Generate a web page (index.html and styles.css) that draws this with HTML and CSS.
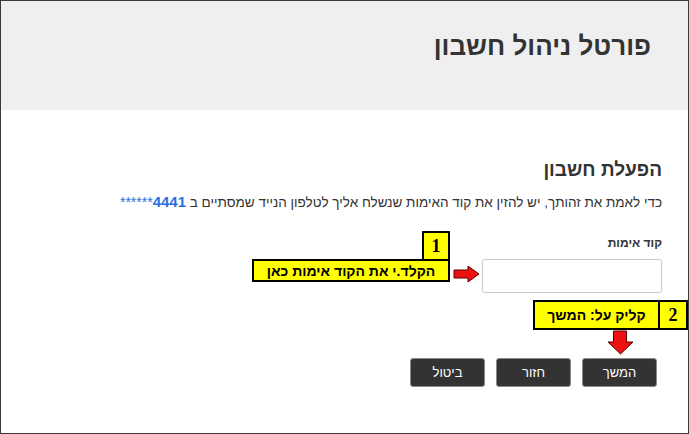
FILE: index.html
```html
<!DOCTYPE html>
<html lang="he" dir="rtl">
<head>
<meta charset="utf-8">
<title>פורטל ניהול חשבון</title>
<link rel="stylesheet" href="styles.css">
</head>
<body>
<div class="frame">
  <header class="top">
    <h1 class="portal-title">פורטל ניהול חשבון</h1>
  </header>
  <main class="content">
    <h2 class="section-title">הפעלת חשבון</h2>
    <p class="intro">כדי לאמת את זהותך, יש להזין את קוד האימות שנשלח אליך לטלפון הנייד שמסתיים ב <b class="num">4441</b><span class="stars">******</span></p>
    <label class="field-label" for="code">קוד אימות</label>
    <input id="code" class="code-input" type="text">
    <div class="actions">
      <button class="btn">המשך</button>
      <button class="btn">חזור</button>
      <button class="btn">ביטול</button>
    </div>
  </main>

  <div class="callout-one">
    <span class="callout-num">1</span>
    <span class="callout-text">הקלד.י את הקוד אימות כאן</span>
  </div>
  <svg class="arrow-right" width="27" height="18" viewBox="0 0 27 18"><path d="M1 5 H15 V1 L26 9 L15 17 V13 H1 Z" fill="#ee1111" stroke="#5a0000" stroke-width="1"/></svg>

  <div class="callout-two">
    <span class="callout2-num">2</span>
    <span class="callout2-text">קליק על: המשך</span>
  </div>
  <svg class="arrow-down" width="27" height="25" viewBox="0 0 27 25"><path d="M6.5 1 H19.5 V12 H26 L13.5 24 L1 12 H6.5 Z" fill="#ee1111" stroke="#5a0000" stroke-width="1"/></svg>
</div>
</body>
</html>
```
FILE: styles.css
```css
html, body {
  margin: 0;
  padding: 0;
  background: #ffffff;
}
body {
  font-family: "Liberation Sans", Arial, sans-serif;
  color: #333333;
}
.frame {
  position: relative;
  width: 689px;
  height: 434px;
  box-sizing: border-box;
  border: 1px solid #3a3a3a;
  overflow: hidden;
}
.top {
  background: #efefef;
  height: 109px;
  box-sizing: border-box;
  padding: 29px 37px 0 0;
}
.portal-title {
  margin: 0;
  font-size: 26px;
  font-weight: bold;
  color: #333333;
  line-height: 32px;
}
.content {
  display: flex;
  flex-direction: column;
  align-items: flex-start;
  padding: 48px 24px 0 0;
  margin-right: 2px;
}
.section-title {
  margin: 0;
  font-size: 19px;
  font-weight: bold;
  line-height: 24px;
  color: #333333;
}
.intro {
  margin: 12px 0 0 0;
  font-size: 13.5px;
  line-height: 16px;
  color: #333333;
}
.num {
  color: #2a6fe0;
  font-weight: bold;
  font-size: 15px;
}
.stars {
  color: #2a6fe0;
  font-size: 14px;
}
.field-label {
  display: block;
  margin-top: 25px;
  font-size: 12px;
  font-weight: bold;
  line-height: 14px;
}
.code-input {
  width: 180px;
  height: 34px;
  box-sizing: border-box;
  border: 1px solid #c6c6cc;
  border-radius: 3px;
  margin: 9px 0 0 0;
  padding: 0 8px;
  font: inherit;
}
.actions {
  display: flex;
  gap: 11px;
  margin-top: 65px;
  margin-right: 5px;
}
.btn {
  width: 75px;
  height: 29px;
  box-sizing: border-box;
  background: #333333;
  color: #ffffff;
  border: 1px solid #8a8a8a;
  border-radius: 3px;
  font-family: "Liberation Sans", Arial, sans-serif;
  font-size: 13px;
  padding: 0;
}

/* annotation overlays */
.callout-one {
  position: absolute;
  left: 251px;
  top: 230px;
  width: 198px;
  display: flex;
  flex-direction: column;
  align-items: flex-start;
}
.callout-num {
  width: 28px;
  height: 28px;
  box-sizing: border-box;
  border: 2px solid #000;
  border-bottom: 0;
  background: #ffff00;
  font-family: "Liberation Serif", serif;
  font-weight: bold;
  font-size: 18px;
  color: #000;
  display: flex;
  align-items: center;
  justify-content: center;
}
.callout-text {
  width: 198px;
  height: 23px;
  box-sizing: border-box;
  border: 2px solid #000;
  background: #ffff00;
  color: #000;
  font-weight: bold;
  font-size: 14px;
  display: flex;
  align-items: center;
  justify-content: center;
}
.arrow-right {
  position: absolute;
  left: 452px;
  top: 264px;
}
.callout-two {
  position: absolute;
  left: 532px;
  top: 299px;
  width: 155px;
  height: 30px;
  box-sizing: border-box;
  border: 2px solid #000;
  background: #ffff00;
  color: #000;
  display: flex;
}
.callout2-num {
  width: 26px;
  border-left: 2px solid #000;
  font-family: "Liberation Serif", serif;
  font-weight: bold;
  font-size: 18px;
  display: flex;
  align-items: center;
  justify-content: center;
}
.callout2-text {
  flex: 1;
  font-weight: bold;
  font-size: 14px;
  display: flex;
  align-items: center;
  justify-content: center;
}
.arrow-down {
  position: absolute;
  left: 606px;
  top: 329px;
}
```
